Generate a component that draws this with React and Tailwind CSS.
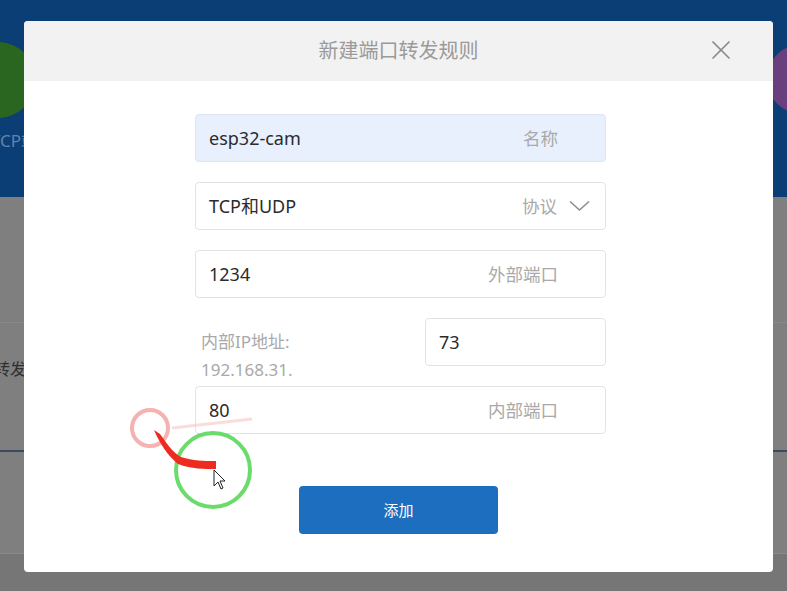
import { X } from "lucide-react";

const font = {
  fontFamily: '"Noto Sans", "Noto Sans CJK SC", sans-serif',
};

function Field({ value, label, filled, children }) {
  return (
    <div
      className={[
        "flex h-[48px] w-[411px] items-center rounded-[4px] border pl-[13px] pr-[47px]",
        filled ? "border-[#dce5f2] bg-[#e8f0fe]" : "border-[#e3e3e3] bg-white",
      ].join(" ")}
    >
      <span className="flex-1 text-[18px] text-[#2b2b2b]">{value}</span>
      <span className="text-[17.5px] text-[#a9a9a9]">{label}</span>
      {children}
    </div>
  );
}

function Backdrop() {
  return (
    <div className="flex h-[591px] w-[787px] flex-col overflow-hidden">
      <div className="relative h-[197px] shrink-0 bg-[#0b3e74]">
        <div className="absolute left-[-40px] top-[42px] size-[76px] rounded-full bg-[#2a661f]" />
        <div className="absolute right-[-50px] top-[44px] size-[70px] rounded-full bg-[#6a3f7e]" />
        <p className="absolute left-[-9px] top-[128px] text-[17px] text-[#5f83ad]">
          TCP端口
        </p>
      </div>

      <div className="h-[126px] shrink-0 border-b border-[#888888] bg-[#7f7f7f]" />

      <div className="flex h-[129px] shrink-0 items-start border-b-2 border-[#3b4a60] bg-[#7f7f7f] pt-[34px]">
        <span className="ml-[-6px] text-[16px] text-[#2f2f2f]">转发</span>
      </div>

      <div className="h-[102px] shrink-0 border-b border-[#8a8a8a] bg-[#7f7f7f]" />

      <div className="flex-1 bg-[#767676]" />
    </div>
  );
}

function Annotation() {
  return (
    <svg
      className="pointer-events-none absolute left-0 top-0"
      width="787"
      height="591"
      viewBox="0 0 787 591"
    >
      <path
        d="M172 428 L252 419"
        stroke="#f6c4c4"
        strokeWidth="3"
        opacity="0.6"
        fill="none"
      />
      <circle
        cx="150"
        cy="428"
        r="18"
        stroke="#f5a3a3"
        strokeWidth="4"
        fill="none"
        opacity="0.85"
      />
      <circle
        cx="213"
        cy="470"
        r="37"
        stroke="#6bdc6b"
        strokeWidth="4"
        fill="none"
      />
      <path
        d="M154 430 L160 434 C166 442 172 452 181 457 C193 461 204 461 216 461 L216 469 C204 469 192 469 178 464 C168 456 160 444 154 430 Z"
        fill="#ee2b1f"
      />
      <path
        d="M214 470 L214 486 L218 482 L221 489 L223 488 L220 481 L225 481 Z"
        fill="#ffffff"
        stroke="#222222"
        strokeWidth="1"
        strokeLinejoin="round"
      />
    </svg>
  );
}

function Dialog() {
  return (
    <div className="absolute left-[24px] top-[21px] flex h-[551px] w-[749px] flex-col overflow-hidden rounded-[4px] bg-white">
      <div className="relative flex h-[60px] shrink-0 items-center justify-center bg-[#f2f2f2]">
        <h2 className="text-[20px] text-[#9a9a9a]">新建端口转发规则</h2>
        <X
          className="absolute right-[36px] top-[13px] size-[32px] text-[#8a8a8a]"
          strokeWidth={1.3}
        />
      </div>

      <div className="flex flex-col items-center pt-[33px]">
        <div className="ml-[4px] flex flex-col gap-[20px]">
          <Field value="esp32-cam" label="名称" filled />

          <div className="flex h-[48px] w-[411px] items-center rounded-[4px] border border-[#e3e3e3] bg-white pl-[13px] pr-[15px]">
            <span className="flex-1 text-[18px] text-[#2b2b2b]">TCP和UDP</span>
            <span className="text-[17.5px] text-[#a9a9a9]">协议</span>
            <svg
              className="ml-[12px]"
              width="21"
              height="12"
              viewBox="0 0 21 12"
              fill="none"
            >
              <path
                d="M1 1.5 L10.5 10 L20 1.5"
                stroke="#8f8f8f"
                strokeWidth="1.6"
              />
            </svg>
          </div>

          <Field value="1234" label="外部端口" />

          <div className="flex h-[48px] w-[411px] items-start justify-between">
            <div className="pl-[6px] pt-[10px] text-[17px] leading-[28px] text-[#a9a9a9]">
              <p>内部IP地址:</p>
              <p>192.168.31.</p>
            </div>
            <div className="flex h-[48px] w-[181px] items-center rounded-[4px] border border-[#e3e3e3] bg-white pl-[13px]">
              <span className="text-[18px] text-[#2b2b2b]">73</span>
            </div>
          </div>

          <Field value="80" label="内部端口" />
        </div>

        <button
          type="button"
          className="mt-[52px] flex h-[48px] w-[199px] items-center justify-center rounded-[4px] bg-[#1e6ebf] text-[15px] text-white"
        >
          添加
        </button>
      </div>
    </div>
  );
}

export default function App() {
  return (
    <div className="relative h-[591px] w-[787px] overflow-hidden" style={font}>
      <Backdrop />
      <Dialog />
      <Annotation />
    </div>
  );
}
